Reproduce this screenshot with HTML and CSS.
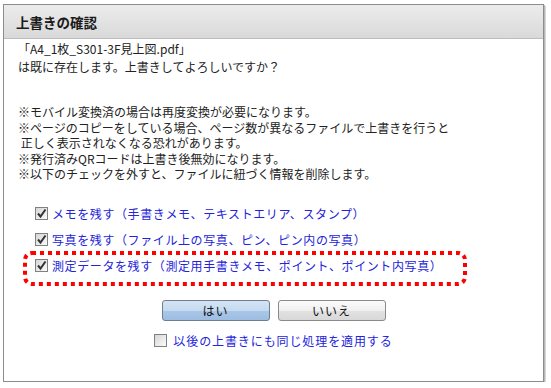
FILE: index.html
```html
<!DOCTYPE html>
<html lang="ja">
<head>
<meta charset="utf-8">
<link rel="stylesheet" href="styles.css">
</head>
<body>
<div class="dialog">
  <div class="header">上書きの確認</div>
  <div class="content">
    <p class="lead">「A4_1枚_S301-3F見上図.pdf」<br>は既に存在します。上書きしてよろしいですか？</p>
    <p class="notes">※モバイル変換済の場合は再度変換が必要になります。<br>※ページのコピーをしている場合、ページ数が異なるファイルで上書きを行うと<br>&nbsp;正しく表示されなくなる恐れがあります。<br>※発行済みQRコードは上書き後無効になります。<br>※以下のチェックを外すと、ファイルに紐づく情報を削除します。</p>
    <div class="checks">
      <label class="row"><span class="cb checked"><svg viewBox="0 0 13 13" width="13" height="13"><path d="M3 6.5 L5.5 9.5 L10.5 2.5" fill="none" stroke="#333" stroke-width="2"/></svg></span><span class="lbl">メモを残す（手書きメモ、テキストエリア、スタンプ）</span></label>
      <label class="row"><span class="cb checked"><svg viewBox="0 0 13 13" width="13" height="13"><path d="M3 6.5 L5.5 9.5 L10.5 2.5" fill="none" stroke="#333" stroke-width="2"/></svg></span><span class="lbl">写真を残す（ファイル上の写真、ピン、ピン内の写真）</span></label>
      <label class="row"><span class="cb checked"><svg viewBox="0 0 13 13" width="13" height="13"><path d="M3 6.5 L5.5 9.5 L10.5 2.5" fill="none" stroke="#333" stroke-width="2"/></svg></span><span class="lbl">測定データを残す（測定用手書きメモ、ポイント、ポイント内写真）</span></label>
      <svg class="mark" width="444" height="35" viewBox="0 0 444 35"><rect x="2" y="2" width="440" height="31" rx="7" ry="7" fill="none" stroke="#ff0000" stroke-width="4" stroke-dasharray="4 4"/></svg>
    </div>
    <div class="buttons">
      <button class="btn yes">はい</button>
      <button class="btn no">いいえ</button>
    </div>
    <label class="apply"><span class="cb"></span><span class="lbl">以後の上書きにも同じ処理を適用する</span></label>
  </div>
</div>
</body>
</html>
```
FILE: styles.css
```css
html, body {
  margin: 0;
  padding: 0;
  background: #ffffff;
}
body {
  font-family: "Noto Sans CJK JP", "Liberation Sans", sans-serif;
  font-size: 12px;
  color: #222;
}
.dialog {
  margin: 4px 0 0 3px;
  width: 541px;
  height: 378px;
  border: 1px solid #8c8c8c;
  box-shadow: 1px 1px 0 #b8b8b8, 2px 2px 0 #d8d8d8;
  background: #fff;
  box-sizing: border-box;
  display: flex;
  flex-direction: column;
}
.header {
  height: 34px;
  box-sizing: border-box;
  border-bottom: 1px solid #bdbdbd;
  background: linear-gradient(#ececec, #d9d9d9);
  padding-left: 12px;
  display: flex;
  align-items: center;
  font-size: 13.5px;
  font-weight: bold;
  color: #1a1a1a;
}
.content {
  padding-left: 14px;
  display: flex;
  flex-direction: column;
}
.lead {
  margin: 1px 0 0;
  line-height: 18px;
}
.notes {
  margin: 28px 0 0;
  line-height: 15.6px;
}
.checks {
  margin-top: 19px;
  position: relative;
  display: flex;
  flex-direction: column;
}
.row {
  height: 26px;
  display: flex;
  align-items: center;
  padding-left: 17px;
  gap: 4px;
}
.lbl {
  color: #2323d9;
  letter-spacing: 0.6px;
  white-space: nowrap;
}
.apply .lbl {
  letter-spacing: 0.9px;
}
.cb {
  width: 13px;
  height: 13px;
  box-sizing: border-box;
  border: 1px solid #7f8080;
  background: linear-gradient(135deg, #d6d6d6, #fbfbfb);
  display: inline-flex;
  flex: none;
}
.cb svg {
  margin: -1px;
}
.mark {
  position: absolute;
  left: 5px;
  top: 50px;
}
.buttons {
  margin-top: 21px;
  display: flex;
  justify-content: center;
  gap: 8px;
  padding-right: 14px;
}
.btn {
  width: 108px;
  height: 21px;
  border-radius: 3px;
  font-family: inherit;
  font-size: 12px;
  color: #111;
  padding: 0;
  letter-spacing: 1px;
}
.yes {
  border: 1px solid #6f7e8f;
  background: linear-gradient(#d4e4f4 0%, #c5daf0 50%, #a9c7e7 51%, #9dbde2 100%);
}
.no {
  border: 1px solid #8a8a8a;
  background: linear-gradient(#fbfbfb 0%, #f0f0f0 50%, #e2e2e2 51%, #d8d8d8 100%);
}
.apply {
  margin-top: 11px;
  display: flex;
  align-items: center;
  justify-content: center;
  gap: 6px;
  padding-right: 14px;
}
```
